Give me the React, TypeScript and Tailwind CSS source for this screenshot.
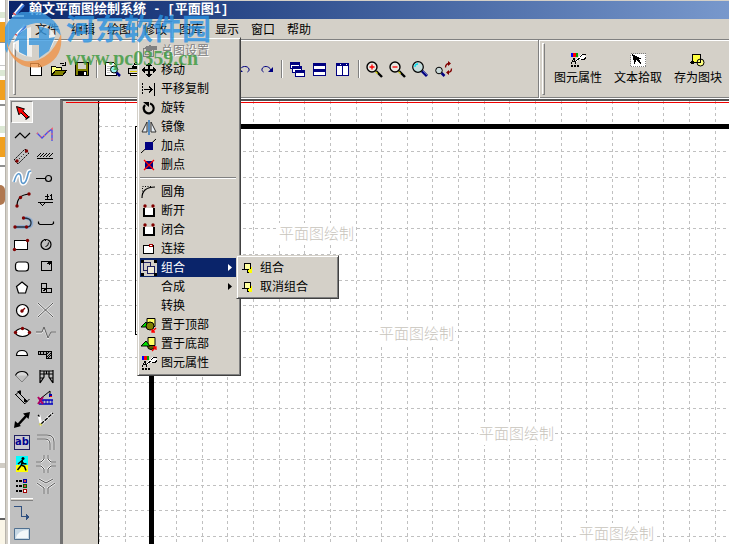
import React, { useState } from 'react'
import clsx from 'clsx'

const CJK = "font-['Liberation_Sans','Noto_Sans_CJK_SC',sans-serif]"

const MENUS = ['文件', '编辑', '绘图', '修改', '图库', '显示', '窗口', '帮助']

interface GlyphProps {
  size?: number
  children: React.ReactNode
  smooth?: boolean
}

function Glyph({ size = 16, children, smooth }: GlyphProps) {
  return (
    <svg
      width={size}
      height={size}
      viewBox={`0 0 ${size} ${size}`}
      fill="none"
      stroke="#000"
      strokeWidth="1"
      shapeRendering={smooth ? 'auto' : 'crispEdges'}
      className="shrink-0 overflow-visible"
      aria-hidden="true"
    >
      {children}
    </svg>
  )
}

const Dot = ({ x, y, fill = '#800000' }: { x: number; y: number; fill?: string }) => (
  <circle cx={x} cy={y} r="1.7" fill={fill} stroke="none" shapeRendering="auto" />
)

/* ---------- main toolbar ---------- */

const Lens = ({ children }: { children?: React.ReactNode }) => (
  <Glyph smooth>
    <path d="M9 10l6 6" stroke="#000" strokeWidth="2.4" />
    <path d="M8.6 10.600l2 2" stroke="#e8e800" strokeWidth="1.2" />
    <circle cx="5" cy="6" r="5" fill="#e8e6e0" strokeWidth="1.4" />
    {children}
  </Glyph>
)

const toolbarGroups: { name: string; icon: React.ReactNode }[][] = [
  [
    {
      name: '新建',
      icon: <Glyph><path d="M2.5 2.5h8l3 3v9h-11z" fill="#fff" /><path d="M10.5 2.5v3h3" /></Glyph>,
    },
    {
      name: '打开',
      icon: (
        <Glyph>
          <path d="M.5 14.5v-9h4l1 1h5v3" fill="#ffff80" />
          <path d="M.5 14.5l4-5h11l-4 5z" fill="#808000" />
          <path d="M8.5 3.5q3-3 5 0M14.5 1v3.5H11" />
        </Glyph>
      ),
    },
    {
      name: '保存',
      icon: (
        <Glyph>
          <path d="M1.5 1.5h13v13h-13z" fill="#808000" />
          <path d="M4 2h8v6H4z" fill="#d4d0c8" stroke="none" />
          <path d="M4 10h9v5H4z" fill="#000" stroke="none" />
          <path d="M10 11h2v3h-2z" fill="#fff" stroke="none" />
        </Glyph>
      ),
    },
  ],
  [
    {
      name: '打印预览',
      icon: (
        <Glyph>
          <path d="M.5 1.5h8l3 3v10H.5z" fill="#fff" />
          <path d="M2 5h4M2 7h3M2 9h3M2 11h3" stroke="#c0c0c0" />
          <path d="M11 11l4 4" stroke="#000080" strokeWidth="2.5" shapeRendering="auto" />
          <circle cx="9" cy="8.5" r="3.5" fill="#90f0f0" shapeRendering="auto" />
        </Glyph>
      ),
    },
    {
      name: '打印',
      icon: (
        <Glyph>
          <path d="M4.500 6.500l3-5h7l-2 5z" fill="#fff" />
          <path d="M7 3.500h6M6 5.500h6" />
          <path d="M.5 7.500h14v5H.5z" fill="#d4d0c8" />
          <path d="M2 10.500h10" stroke="#e0d000" />
          <path d="M2.500 12.500h10v2h-10z" fill="#fff" />
        </Glyph>
      ),
    },
  ],
  [
    { name: '剪切', icon: <Glyph><path d="M5 1l5 9M11 1l-5 9" /><circle cx="4" cy="12" r="2" /><circle cx="11" cy="12" r="2" /></Glyph> },
    { name: '复制', icon: <Glyph><path d="M1.5 1.5h7v9h-7zM6.500 5.500h7v9h-7z" fill="#fff" /></Glyph> },
    { name: '粘贴', icon: <Glyph><path d="M1.5 2.500h11v12h-11z" fill="#808000" /><path d="M6.500 7.500h8v7h-8z" fill="#fff" /></Glyph> },
  ],
  [
    {
      name: '撤销',
      icon: (
        <Glyph smooth>
          <path d="M4 9C5 4.500 12 4.500 13 8c.4 1.500-.5 2.500-1.500 3" stroke="#000080" />
          <path d="M2 6v5h5z" fill="#000080" stroke="none" />
        </Glyph>
      ),
    },
    {
      name: '重做',
      icon: (
        <Glyph smooth>
          <path d="M12 9C10 4.500 4 4.500 3 8c-.4 1.500.5 2.500 1.500 3" stroke="#000080" />
          <path d="M14 6v5H9z" fill="#000080" stroke="none" />
        </Glyph>
      ),
    },
  ],
  [
    {
      name: '层叠',
      icon: (
        <Glyph>
          {[[0, 1], [2, 5], [5, 9]].map(([x, y]) => (
            <g key={x} stroke="none">
              <path d={`M${x} ${y}h10v7h-10z`} fill="#000080" />
              <path d={`M${x + 1} ${y + 3}h8v3h-8z`} fill="#fff" />
            </g>
          ))}
        </Glyph>
      ),
    },
    {
      name: '横向平铺',
      icon: (
        <Glyph>
          <path d="M0 2h13v13H0z" fill="#000080" stroke="none" />
          <path d="M1 5h11v3H1zM1 11h11v3H1z" fill="#fff" stroke="none" />
        </Glyph>
      ),
    },
    {
      name: '纵向平铺',
      icon: (
        <Glyph>
          <path d="M0 2h13v13H0z" fill="#000080" stroke="none" />
          <path d="M1 5h5v9H1zM7 5h5v9H7z" fill="#fff" stroke="none" />
          <path d="M4 3h1v1H4zM10 3h1v1h-1z" fill="#fff" stroke="none" />
        </Glyph>
      ),
    },
  ],
  [
    { name: '放大', icon: <Lens><path d="M2.500 6h5M5 3.500v5" stroke="#f00" strokeWidth="1.3" /></Lens> },
    { name: '缩小', icon: <Lens><path d="M2.500 6h5" stroke="#f00" strokeWidth="1.3" /></Lens> },
    {
      name: '窗口缩放',
      icon: (
        <Glyph smooth>
          <path d="M9 10l5 5" stroke="#000080" strokeWidth="3" />
          <path d="M9.500 9.500l5 5" stroke="#8090d0" strokeWidth=".7" />
          <circle cx="5" cy="6" r="5.300" fill="#c4dcdc" strokeWidth="1.200" />
          <path d="M2 6q0-3 3-3" stroke="#00e0f0" strokeWidth="1.300" />
        </Glyph>
      ),
    },
    {
      name: '刷新视图',
      icon: (
        <Glyph smooth>
          <path d="M5.500 12l3 3" stroke="#000080" strokeWidth="2.500" />
          <circle cx="3" cy="9.500" r="3.300" fill="#c8d8d8" />
          <path d="M9.500 6.500q0-4 4-4M15.500 7.500q0 4-4 4" stroke="#800000" strokeWidth="1.300" />
          <path d="M12 0l3 2.500L12 5zM13 9l-3 2.500 3 2.500z" fill="#800000" stroke="none" />
        </Glyph>
      ),
    },
  ],
]

const PropertyGlyph = () => (
  <Glyph>
    <path d="M6 7l5-5h4l1 3-4 3H9L5 11z" fill="#fff" stroke="none" />
    <path d="M1 1h2v4H1z" fill="#00f" stroke="none" />
    <path d="M3 1h3v4H3z" fill="#f00" stroke="none" />
    <path d="M6 1h2v4H6z" fill="#00a000" stroke="none" />
    <path d="M1 11.500l3-5 2 5M2 9.500h3M6 9l4-3M10 4.500l3-2h3M11 7.500h3l2-2" />
    <path d="M1 13h2v2H1zM4 13h2v2H4zM7 13h2v2H7z" fill="#000" stroke="none" />
  </Glyph>
)

const rightTools = [
  { name: '图元属性', icon: <PropertyGlyph /> },
  {
    name: '文本拾取',
    icon: (
      <Glyph>
        <path d="M.5 1.500h15v13H.5z" fill="#fff" stroke="#808080" strokeDasharray="1 1" />
        <path d="M2 2l10 5H8.500l3 4-1 1-4-4-2 4z" fill="#000" stroke="none" />
      </Glyph>
    ),
  },
  {
    name: '存为图块',
    icon: (
      <Glyph>
        <path d="M2.500 2.500h8v8h-8z" fill="#ffff40" />
        <circle cx="10.500" cy="10.500" r="3.500" fill="#ffff80" shapeRendering="auto" />
        <path d="M0 10.500h6M5.500 10.500h5v-5" />
        <path d="M1 9h3v3H1z" fill="#000" stroke="none" />
      </Glyph>
    ),
  },
]

/* ---------- drawing palette, two glyphs per row ---------- */

const G = ({ children, smooth }: { children: React.ReactNode; smooth?: boolean }) => (
  <Glyph size={20} smooth={smooth}>{children}</Glyph>
)

// White halo under a grey centre line, as the road glyphs use.
const Road = ({ d }: { d: string }) => (
  <>
    <path d={d} stroke="#f0f0f0" strokeWidth="2.200" />
    <path d={d} stroke="#505050" />
  </>
)

const palette: { name: string; icon: React.ReactNode }[] = [
  { name: '选择', icon: <G smooth><path d="M4.500 4.500l8 2.500-1.800 1.800 5.800 5.700-2 2-5.700-5.700L6.900 12.800z" fill="#f00" /><path d="M13.500 17.500l4-3" strokeWidth="1.500" /></G> },
  { name: '', icon: null },
  { name: '折线', icon: <G smooth><path d="M3 14l5-5 5 5 5-5" strokeWidth="1.200" /></G> },
  { name: '多段线', icon: <G smooth><path d="M1 9l5 5 6-6 4-3v12" stroke="#4848e8" strokeWidth="1.300" /><path d="M1 9l5 5 6-6 4-3v12" stroke="#f66" strokeWidth="1.800" strokeDasharray="1 4" /></G> },
  { name: '墙体', icon: <G smooth><path d="M2 14L13 3l4 4L6 18z" strokeDasharray="2 1" /><path d="M7 13l7-7" strokeDasharray="1 2" /><Dot x={5} y={15} /><Dot x={14.500} y={5} /></G> },
  { name: '剖面', icon: <G><path d="M1 12.500h16" /><path d="M1 11l4-4M4 11l4-4M7 11l4-4M10 11l4-4M13 11l4-4" shapeRendering="auto" /></G> },
  { name: '曲线', icon: <G smooth><path d="M2 14C5 3 9 4 9 11c0 6 4 6 6-1s1-6 4-7" stroke="#fff" strokeWidth="4.500" /><path d="M2 14C5 3 9 4 9 11c0 6 4 6 6-1s1-6 4-7" stroke="#5c98cc" strokeWidth="1.600" /></G> },
  { name: '引线', icon: <G smooth><path d="M0 10.500h9.500" /><circle cx="12.500" cy="10.500" r="3" strokeWidth="1.200" /></G> },
  { name: '圆弧', icon: <G smooth><path d="M5 16q0-11 12-12" strokeWidth="1.200" /><Dot x={5} y={16} /><Dot x={8.500} y={7.500} /><Dot x={17} y={4} /></G> },
  { name: '标高', icon: <G><path d="M2 12.500h15M3.500 12.500l3 3 3-3" /><path d="M9 6.500h4M11.500 4v5M9 9.500h8M15.500 4v6M14 5.500h2" /></G> },
  { name: '连弧', icon: <G smooth><path d="M3 15h12q5 0 4.500-5-.5-4-7.500-4" stroke="#90acd0" strokeWidth="3.600" /><path d="M3 15h12q4.500 0 4-5-.5-4-7.500-4" stroke="#203040" strokeWidth="1.300" /><Dot x={3} y={15} /><Dot x={14.500} y={15} /><Dot x={11.500} y={6} /></G> },
  { name: '槽', icon: <G smooth><path d="M2.500 9.500v2l1.500 1h12l1.500-1v-2" strokeWidth="1.200" /></G> },
  { name: '矩形', icon: <G><path d="M2.500 6.500h13v9h-13z" fill="#fff" /><Dot x={2.500} y={15.500} /><Dot x={15.500} y={6.500} /></G> },
  { name: '球', icon: <G smooth><circle cx="10" cy="10.500" r="5" strokeWidth="1.200" /><path d="M9.500 12.500q3 0 3-4" /><path d="M8 5l2 2" /></G> },
  { name: '圆角矩形', icon: <G smooth><rect x="3.500" y="6" width="13" height="9" rx="3" fill="#fff" strokeWidth="1.200" /></G> },
  { name: '洞口', icon: <G><path d="M5.500 5.500h10v9h-10z" /><path d="M11 8l3-2M13 9l2-3" /></G> },
  { name: '多边形', icon: <G smooth><path d="M10 4l5.500 4.500-2 6.500h-7l-2-6.500z" fill="#fff" strokeWidth="1.200" /></G> },
  { name: '组块', icon: <G><path d="M5.500 5.500h5v9h-5zM10.500 10.500h5v4h-5zM5.500 10.500h5" /><path d="M7 13l3-2" /></G> },
  { name: '圆', icon: <G smooth><circle cx="10.500" cy="10.500" r="6" fill="#fff" strokeWidth="1.200" /><path d="M9 12l4-4" stroke="#800000" strokeWidth="1.200" /><Dot x={10} y={11} /></G> },
  { name: '交叉', icon: <G smooth><Road d="M2 3l15 14M17 3L2 17" /></G> },
  { name: '椭圆', icon: <G smooth><ellipse cx="10.500" cy="10.500" rx="7" ry="4" fill="#fff" strokeWidth="1.200" /><Dot x={3.500} y={10.500} /><Dot x={17.500} y={10.500} /><Dot x={10.500} y={6.500} /></G> },
  { name: '波形', icon: <G smooth><path d="M0 11h6l2-4 4 10 3-7h5" stroke="#f0f0f0" /><path d="M0 10h6l2-5 4 11 3-6h5" stroke="#606060" /></G> },
  { name: '弓形', icon: <G smooth><path d="M4.500 11.500q0-5 5.500-5t5.500 5z" fill="#fff" strokeWidth="1.200" /></G> },
  { name: '台阶', icon: <G><path d="M2.500 7.500h13v7h-5v-4h-8z" fill="#aaa" /><path d="M4 8v2M7 8v2M10 8v2M11 13l4-4M12 14l3-3M11 10l2-2" /></G> },
  { name: '扇形', icon: <G smooth><path d="M3.500 9.500L10 16l6-6.500" stroke="#808080" /><path d="M3.500 9.500q1.500-4 6.500-4t6 4" fill="#d8d8d8" strokeWidth="1.200" /></G> },
  { name: '门架', icon: <G smooth><path d="M4 4v13M17 4v13M4 5h13M4 8h13M8 5v6l-4 6M13 5v6l4 6M4 12h4M13 12h4M10.500 5v3M4 15h2M15 15h2" strokeWidth="1.200" /></G> },
  { name: '尺寸', icon: <G smooth><path d="M6 4l9 9M3.500 7l5-5M12.500 16l5-5M3 6l10 10" /><path d="M5 3h4v4zM16 14h-4v-4z" fill="#000" stroke="none" /></G> },
  { name: '起重机', icon: <G smooth><path d="M4 11L14 3v5" /><path d="M3 12h14M3 16h14" stroke="#0000c0" strokeWidth="1.400" /><path d="M7 12v4M10 12v4M13 12v4M16 12v4" stroke="#0000c0" /><path d="M2 9l5 7M7 9l-5 7" stroke="#b00060" strokeWidth="2" /><path d="M13 6h3v3h-3z" fill="#00a" stroke="none" /><path d="M14 8h2v1h-2z" fill="#f00" stroke="none" /></G> },
  { name: '双向箭头', icon: <G smooth><path d="M5 16L15 5" strokeWidth="2.600" /><path d="M2 18l1-7 6 5zM18 2l-7 1.500L16.500 9z" fill="#000" stroke="none" /></G> },
  { name: '勾选', icon: <G smooth><path d="M3 5l2 9L17 3" stroke="#fff" strokeWidth="2.600" /><path d="M2 5l1.500 1.500M5 14L17 3" strokeWidth="1.400" strokeDasharray="4 1" /><path d="M3 14l3 1" stroke="#d0d060" strokeWidth="2" /></G> },
  {
    name: '文字',
    icon: (
      <span className="flex h-[15px] w-4 items-center justify-center border border-[#202060] bg-[#c8c8d0] pb-px font-['DejaVu_Sans',sans-serif] text-[10px] leading-none font-bold text-[#000090]">
        ab
      </span>
    ),
  },
  { name: '弯道', icon: <G smooth><Road d="M1 3h10q7 0 7 7v8" /><Road d="M1 7h8q5 0 5 5v6" /></G> },
  { name: '行人', icon: <G smooth><path d="M4 2h12v10H4z" fill="#0ff" stroke="none" /><path d="M4 11h12v7H4z" fill="#ff0" stroke="none" /><circle cx="11" cy="4.500" r="1.500" fill="#000" stroke="none" /><path d="M10.500 6l-1 5-4 5M9.500 11l3 1.500 1.500 4M6 10l3.500-3 2 2.500 3 .5" strokeWidth="1.500" /></G> },
  { name: '十字路口', icon: <G smooth><Road d="M8 1v4L5 8H0M12 1v4l3 3h5M8 19v-4l-3-3H0M12 19v-4l3-3h5" /></G> },
  {
    name: '图例',
    icon: (
      <G>
        {['#0000a0', '#006000', '#a00000'].map((c, i) => (
          <g key={c} stroke="none">
            <path d={`M4 ${4 + i * 5}h2v2H4zM7 ${4 + i * 5}h3v2H7z`} fill="#000" />
            <path d={`M11 ${3 + i * 5}h4v4h-4z`} fill={c} />
            <path d={`M12 ${4 + i * 5}h2v2h-2z`} fill={i === 2 ? '#fff' : '#e04040'} />
          </g>
        ))}
      </G>
    ),
  },
  { name: '三岔路口', icon: <G smooth><Road d="M1 7l7 5v6M19 7l-7 5v6M3 3l7 4 7-4" /></G> },
]

const lowerPalette = [
  { name: '连接线', icon: <G><path d="M2 3.500h7v10h7" stroke="#305080" /><path d="M14 11l4 3-4 3z" fill="#305080" stroke="none" /></G> },
  { name: '图片', icon: <G smooth><path d="M2.500 3.500h15v11h-15z" fill="#c8d8e4" stroke="#507090" /><path d="M4 13q2-8 12-8v8z" fill="#f4f8fa" stroke="none" /></G> },
]

/* ---------- 修改 menu ---------- */

interface Entry {
  name: string
  icon?: React.ReactNode
  disabled?: boolean
  sub?: boolean
}

const BracketGlyph = () => (
  <Glyph>
    <path d="M3 5h10v8H3z" fill="#fff" stroke="none" />
    <path d="M2 5h2v7h8V5h2v9H2z" fill="#000" stroke="none" />
    <Dot x={4} y={3} /><Dot x={12} y={3} />
  </Glyph>
)

const menuTop: Entry[] = [
  { name: '总图设置', disabled: true, icon: <Glyph><path d="M2.500 5.500h10v8h-10z" stroke="#808080" /><path d="M4 4l5-2 2 1h5v4h-4L8 9 5 8z" fill="#808080" stroke="none" /><path d="M4 11h4" stroke="#808080" /></Glyph> },
  { name: '移动', icon: <Glyph><path d="M8 2v12M2 8h12" strokeWidth="1.400" /><path d="M8 0l3 4H5zM8 16l3-4H5zM0 8l4-3v6zM16 8l-4-3v6z" fill="#000" stroke="none" /></Glyph> },
  { name: '平移复制', icon: <Glyph><path d="M1.500 2v12" strokeDasharray="2 1" /><path d="M13.500 2v13M3 8.500h8M8 5.500l3 3-3 3" /></Glyph> },
  { name: '旋转', icon: <Glyph smooth><path d="M9 3.500a5 5 0 1 1-5 1.500" strokeWidth="2.200" /><path d="M2 2h6v5L5.500 5z" fill="#000" stroke="none" /></Glyph> },
  { name: '镜像', icon: <Glyph smooth><path d="M6 3v10H1zM10 3v10h5z" fill="#e8eef4" stroke="#303030" /><path d="M8 1v15" stroke="#2070c0" strokeWidth="1.400" /></Glyph> },
  { name: '加点', icon: <Glyph smooth><path d="M0 15L15 1" /><path d="M4 4h8v8H4z" fill="#000080" stroke="none" /></Glyph> },
  { name: '删点', icon: <Glyph smooth><path d="M4 4h8v8H4z" fill="#000080" stroke="none" /><path d="M3 3l10 10M13 3L3 13" stroke="#f00" strokeWidth="1.300" /></Glyph> },
]

const menuBottom: Entry[] = [
  { name: '圆角', icon: <Glyph smooth><path d="M1 14q0-11 13-11" strokeWidth="1.200" /><path d="M1.500 10V2.500H10" strokeDasharray="1 1.500" /></Glyph> },
  { name: '断开', icon: <BracketGlyph /> },
  { name: '闭合', icon: <BracketGlyph /> },
  { name: '连接', icon: <Glyph><path d="M2.500 4.500h10v8h-10z" fill="#fff" /><path d="M8.500 3.500h3v2h-3z" stroke="#a00000" fill="#fff" /></Glyph> },
  { name: '组合', sub: true, icon: <Glyph><path d="M0 0h16v16H0z" fill="#d4d0c8" stroke="none" /><path d="M2.500 2.500h7v8h-7z" stroke="#202060" /><path d="M6.500 6.500h7v7h-7z" fill="#f0ecd8" stroke="#202060" /><path d="M0 0h3v3H0zM13 0h3v3h-3zM0 13h3v3H0zM13 13h3v3h-3z" fill="#000" stroke="none" /></Glyph> },
  { name: '合成', sub: true },
  { name: '转换' },
  { name: '置于顶部', icon: <Glyph smooth><path d="M6 1.500h8v8H6z" fill="#ffff60" /><path d="M0 10l5-5 3 5z" fill="#00e000" /><circle cx="9" cy="9" r="4" fill="#808000" /><path d="M15 11l-4 4M11 12v3h3" stroke="#f00" strokeWidth="1.300" /></Glyph> },
  { name: '置于底部', icon: <Glyph smooth><circle cx="10" cy="10" r="3.500" fill="#606000" /><path d="M7 1.500h7v8H7z" fill="#ffff60" /><path d="M0 10l5-5 4 5z" fill="#00e000" /><path d="M11 15l4-4M12 11h3v3" stroke="#f00" strokeWidth="1.300" /></Glyph> },
  { name: '图元属性', icon: <PropertyGlyph /> },
]

const GroupGlyph = () => (
  <Glyph>
    <path d="M8 7h4v6H8z" fill="#ffff00" stroke="none" />
    <path d="M4.500 3.500h6v6h-6z" fill="#ffffa0" />
    <path d="M2 9.500h6M7.500 9v3.500H11" />
    <path d="M9 9h3v4H9z" fill="#ffff00" stroke="none" />
  </Glyph>
)

const RAISED = 'border border-t-[#d4d0c8] border-l-[#d4d0c8] border-r-[#404040] border-b-[#404040] bg-[#d4d0c8] shadow-[inset_1px_1px_0_#ffffff,inset_-1px_-1px_0_#808080]'

function MenuEntry({ entry, active }: { entry: Entry; active?: boolean }) {
  return (
    <button
      disabled={entry.disabled}
      className={clsx(
        'flex h-[19px] w-full items-center gap-1 pr-1 pl-px text-left text-xs whitespace-nowrap',
        active && 'bg-[#0a246a] text-white',
        entry.disabled && 'text-[#808080] [text-shadow:1px_1px_0_#fff]',
      )}
    >
      <span className="flex w-4 shrink-0 justify-center">{entry.icon}</span>
      <span className="flex-1">{entry.name}</span>
      {entry.sub && (
        <svg width="4" height="7" viewBox="0 0 4 7" fill="currentColor" aria-hidden="true"><path d="M0 0l4 3.500L0 7z" /></svg>
      )}
    </button>
  )
}

function ModifyMenu() {
  return (
    <div className={clsx('absolute top-4 left-0 z-20 w-[104px] py-[3px] pr-1 pl-[2px]', RAISED)}>
      {menuTop.map(e => <MenuEntry key={e.name} entry={e} />)}
      <div className="my-[3px] h-[2px] border-t border-[#808080] bg-white" />
      {menuBottom.map(e => (
        <div key={e.name} className="relative">
          <MenuEntry entry={e} active={e.name === '组合'} />
          {e.name === '组合' && (
            <div className={clsx('absolute -top-[3px] left-full z-30 w-[103px] p-[2px]', RAISED)}>
              {['组合', '取消组合'].map(n => <MenuEntry key={n} entry={{ name: n, icon: <GroupGlyph /> }} />)}
            </div>
          )}
        </div>
      ))}
    </div>
  )
}

/* ---------- drawing area ---------- */

const STEP = 25.65
const marks = Array.from({ length: 80 }, (_, i) => i)

function Canvas() {
  return (
    <div className="relative min-w-0 flex-1 overflow-hidden border-l border-black bg-white">
      <svg className="absolute inset-0 h-full w-full" shapeRendering="crispEdges" aria-hidden="true">
        <g stroke="#c0c0c0" strokeDasharray="3 3">
          {marks.map(i => {
            const p = Math.round(i * STEP) + 0.5
            return (
              <g key={i}>
                <line x1={p} x2={p} y1="0" y2="2400" />
                <line x1="0" x2="2400" y1={p - 1} y2={p - 1} />
              </g>
            )
          })}
        </g>
        <rect x="36.500" y="25.500" width="70" height="208" fill="none" stroke="#000" />
        <path d="M2400 25.500H52.500V2400" fill="none" stroke="#000" strokeWidth="5" />
      </svg>
      {[0, 1, 2, 3].map(i => (
        <span
          key={i}
          className="absolute bg-white px-px text-[15px] leading-[22px] font-light whitespace-nowrap text-[#c8c4bc]"
          style={{ left: 179 + i * 100, top: 122 + i * 100 }}
        >
          平面图绘制
        </span>
      ))}
    </div>
  )
}

/* Sliver of the browser page that shows past the window's left edge. */
function PageBehind() {
  return (
    <div className="flex w-[5px] shrink-0 flex-col overflow-hidden bg-white">
      <div className="mt-3 h-[6px] bg-[#dce8d4]" />
      <div className="mt-1 h-5 bg-[#f0a020]" />
      <div className="h-px bg-[#909090]" />
      <div className="mt-[22px] h-px bg-[#c8c8c8]" />
      <div className="mt-1 h-[6px] bg-[#dce8d4]" />
      <div className="mt-1 h-5 bg-[#f0a020]" />
      <div className="mt-1 h-[2px] bg-[#909090]" />
      <div className="mt-[20px] h-[7px] bg-[#dce8d4]" />
      <div className="mt-1 h-[20px] bg-[#f0a020]" />
      <div className="mt-2 h-[2px] bg-[#909090]" />
      <div className="mt-[18px] h-5 rounded-r-full bg-[#b07850]" />
      <div className="mt-[258px] h-[5px] bg-[#d0ccc4]" />
      <div className="mt-[50px] h-[2px] bg-[#606060]" />
      <div className="flex-1 bg-[#faf6e8]" />
    </div>
  )
}

function SiteStamp() {
  return (
    <div className="pointer-events-none absolute top-3 left-[5px] z-40 flex gap-1 opacity-80">
      <svg width="57" height="57" viewBox="0 0 57 57" aria-hidden="true">
        <path d="M2 41A28 28 0 0 1 44 5Q55 12 56 24 46 10 31 11 8 14 2 41z" fill="#3c9ae0" />
        <path d="M2 30Q5 45 20 49 44 52 56 22 59 47 37 55 10 59 2 34z" fill="#f09448" />
        <path d="M8 33Q10 19 26 15v12h8V14q12 1 16 9-1 16-15 21V33h-8v12Q12 44 8 33z" fill="#fff" opacity=".85" />
        <path d="M13 22l9-6v28l-8-4V28l-5 2zM34 14l10 3v9l6-1-6 14-10 7V33H24v-7h10z" fill="#3c9ae0" />
      </svg>
      <div className="flex flex-col whitespace-nowrap">
        <span className="text-[29px] leading-[36px] font-bold text-[#2890e0]">河东软件园</span>
        <span className="font-['Liberation_Serif',serif] text-xl leading-[20px] font-bold text-[#38983c]">www.pc0359.cn</span>
      </div>
    </div>
  )
}

const AppGlyph = () => (
  <Glyph smooth>
    <path d="M3 13L12 2" stroke="#fff" strokeWidth="3" />
    <path d="M5 12l8-9" stroke="#4080e0" strokeWidth="2" />
    <path d="M1 14h12" stroke="#e0e8f0" strokeWidth="2" />
    <path d="M2 11l3 2" stroke="#e04040" strokeWidth="1.500" />
  </Glyph>
)

const Gripper = () => <div className="my-[3px] w-[3px] shrink-0 border border-t-white border-l-white border-r-[#808080] border-b-[#808080]" />

export default function App() {
  const [tool, setTool] = useState('选择')

  return (
    <div className={clsx('relative flex h-screen overflow-hidden bg-white text-xs text-black', CJK)}>
      <PageBehind />
      <div className="w-1 shrink-0 border-r border-l border-r-white border-l-[#b8b4ac] bg-[#d4d0c8]" />

      <div className="flex min-w-0 flex-1 flex-col bg-[#d4d0c8]">
        <header className="mt-px flex h-[18px] shrink-0 items-center gap-[2px] bg-linear-to-r from-[#0a246a] to-[#7898cc] pl-[2px] text-[13px] leading-none font-bold whitespace-pre text-white">
          <AppGlyph />
          <h1>
            翰文平面图绘制系统
            <span className="font-['Liberation_Mono',monospace] text-xs">{' - ['}</span>
            平面图
            <span className="font-['Liberation_Mono',monospace] text-xs">1]</span>
          </h1>
        </header>

        <nav className="flex h-5 shrink-0 items-end pl-1">
          <span className="flex w-4 justify-center"><AppGlyph /></span>
          {MENUS.map(m => (
            <div key={m} className="relative">
              <button
                className={clsx(
                  'h-[18px] w-9 border leading-none',
                  m === '修改' ? 'border-t-[#808080] border-r-white border-b-white border-l-[#808080]' : 'border-transparent',
                )}
              >
                {m}
              </button>
              {m === '修改' && <ModifyMenu />}
            </div>
          ))}
        </nav>

        <div className="flex h-[60px] shrink-0 border-t border-b border-t-[#808080] border-b-white shadow-[inset_0_1px_0_#fff,inset_0_-1px_0_#808080]">
          <div className="flex min-w-0 flex-1 items-stretch overflow-hidden border-r border-[#808080] pl-1">
            <Gripper />
            <div className="ml-2 flex items-center">
              {toolbarGroups.map((group, i) => (
                <React.Fragment key={i}>
                  {i > 0 && <span className="mx-[3px] h-[18px] w-[2px] shrink-0 border-l border-[#808080] bg-white" />}
                  {group.map(b => (
                    <button key={b.name} aria-label={b.name} className="flex h-6 w-[23px] shrink-0 items-center justify-center">
                      {b.icon}
                    </button>
                  ))}
                </React.Fragment>
              ))}
            </div>
          </div>
          <div className="flex shrink-0 border-l border-white pr-px pl-[2px]">
            <Gripper />
            <div className="ml-[3px] flex">
              {rightTools.map(t => (
                <button key={t.name} className="flex w-[60px] flex-col items-center justify-center gap-px leading-[18px]">
                  {t.icon}
                  {t.name}
                </button>
              ))}
            </div>
          </div>
        </div>

        <div className="flex min-h-0 flex-1">
          <aside className="flex w-[51px] shrink-0 flex-col overflow-hidden border-t border-l border-white bg-[#c0c0c0] pt-px">
            <div className="grid grid-cols-[24px_24px]">
              {palette.map((p, i) =>
                p.icon ? (
                  <button
                    key={i}
                    aria-label={p.name}
                    onClick={() => setTool(p.name)}
                    className={clsx(
                      'flex h-[22px] items-center justify-center',
                      tool === p.name && 'ml-px w-[22px] border border-t-[#808080] border-r-white border-b-white border-l-[#808080] bg-[#eae8e4]',
                    )}
                  >
                    {p.icon}
                  </button>
                ) : (
                  <span key={i} />
                ),
              )}
            </div>
            <div className="mt-px mb-px ml-px h-[3px] w-[22px] shrink-0 border-t border-b border-t-white border-b-[#808080] bg-[#d4d0c8]" />
            {lowerPalette.map(p => (
              <button key={p.name} aria-label={p.name} className="flex h-[22px] w-6 shrink-0 items-center justify-center">
                {p.icon}
              </button>
            ))}
          </aside>

          <main className="relative flex min-w-0 flex-1 border-t-2 border-l-[3px] border-t-[#505050] border-l-[#707070]">
            <div className="w-[35px] shrink-0 bg-[#d4d0c8]" />
            <Canvas />
            <div className="absolute top-px right-0 left-[3px] h-px bg-[#f00000]" />
          </main>
        </div>
      </div>

      <SiteStamp />
    </div>
  )
}
